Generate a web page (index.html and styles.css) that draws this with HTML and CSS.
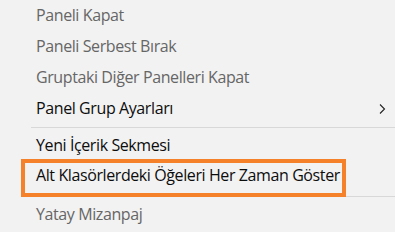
FILE: index.html
```html
<!DOCTYPE html>
<html lang="tr">
<head>
<meta charset="utf-8">
<link rel="stylesheet" href="styles.css">
</head>
<body>
<div class="menu">
  <div class="item disabled">Paneli Kapat</div>
  <div class="item disabled">Paneli Serbest Bırak</div>
  <div class="item disabled">Gruptaki Diğer Panelleri Kapat</div>
  <div class="item submenu">
    <span>Panel Grup Ayarları</span>
    <svg class="chev" width="7" height="11" viewBox="0 0 7 11"><polyline points="1,0.5 5.5,5 1,9.5" fill="none" stroke="#222" stroke-width="1.1"/></svg>
  </div>
  <div class="sep"></div>
  <div class="item first-after-sep">Yeni İçerik Sekmesi</div>
  <div class="item highlighted">Alt Klasörlerdeki Öğeleri Her Zaman Göster</div>
  <div class="sep sep2"></div>
  <div class="item disabled last">Yatay Mizanpaj</div>
  <div class="edge"></div>
</div>
</body>
</html>
```
FILE: styles.css
```css
html, body {
  margin: 0;
  padding: 0;
  background: #f2f2f2;
}
body {
  width: 395px;
  height: 232px;
  overflow: hidden;
  font-family: "Open Sans", "Noto Sans", sans-serif;
  font-size: 16px;
  letter-spacing: -0.4px;
  color: #0d0d0d;
}
.menu {
  display: flex;
  flex-direction: column;
}
.item {
  height: 31px;
  line-height: 31px;
  padding-left: 36px;
  white-space: nowrap;
}
.disabled {
  color: #666;
}
.submenu {
  display: flex;
  justify-content: space-between;
  align-items: center;
  padding-right: 9px;
}
.chev {
  display: block;
  margin-top: 1px;
}
.sep {
  height: 1px;
  background: #d8d8d8;
  margin: 3px 0 2px 31px;
}
.first-after-sep {
  height: 30px;
}
.highlighted {
  position: relative;
}
.highlighted::after {
  content: "";
  position: absolute;
  left: 21px;
  top: -1px;
  width: 317px;
  height: 30px;
  border: 4px solid #f5822a;
}
.sep2 {
  margin: 5px 0 2px 31px;
}
.edge {
  width: 25px;
  height: 1px;
  background: #d8d8d8;
  margin-top: 4px;
}
```
